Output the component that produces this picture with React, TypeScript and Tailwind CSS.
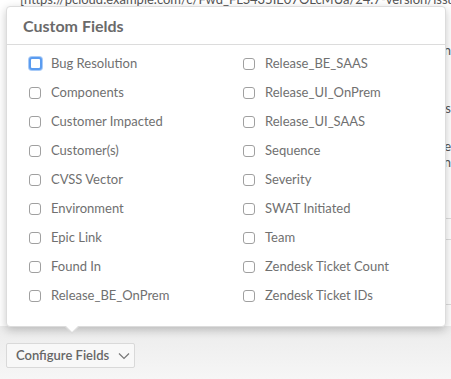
import React from "react";

const left = [
  "Bug Resolution",
  "Components",
  "Customer Impacted",
  "Customer(s)",
  "CVSS Vector",
  "Environment",
  "Epic Link",
  "Found In",
  "Release_BE_OnPrem",
];
const right = [
  "Release_BE_SAAS",
  "Release_UI_OnPrem",
  "Release_UI_SAAS",
  "Sequence",
  "Severity",
  "SWAT Initiated",
  "Team",
  "Zendesk Ticket Count",
  "Zendesk Ticket IDs",
];

function Row({ label, focused }: { label: string; focused?: boolean }) {
  return (
    <div className="flex h-[29px] items-center">
      <span
        className={
          focused
            ? "box-border h-[13px] w-[13px] rounded-[3px] border-2 border-[#5b9cf0] bg-white shadow-[0_0_0_1px_#a9cbf7]"
            : "box-border h-[12px] w-[12px] rounded-[3px] border border-[#a0a0a0] bg-white"
        }
      />
      <span className={focused ? "ml-[9px] text-[13px] text-[#707070]" : "ml-[10px] text-[13px] text-[#707070]"}>
        {label}
      </span>
    </div>
  );
}

export default function App() {
  return (
    <div
      className="relative h-[379px] w-[451px] overflow-hidden bg-[#f3f3f3]"
      style={{ fontFamily: "Lato, 'Open Sans', sans-serif" }}
    >
      {/* background page */}
      <div className="flex h-[326px] flex-col bg-white">
        <div className="h-[6px] overflow-hidden">
          <div className="mt-[-9px] whitespace-nowrap pl-[20px] text-[13px] leading-[16px] text-[#555]">
            [https://pcloud.example.com/c/Fwd_FLS435IE07OLcMUa/24.7-version/issue
          </div>
        </div>
        <div className="flex flex-1 flex-col items-end text-[13px] text-[#555]">
          <div className="mt-[36px] leading-[16px]">n</div>
          <div className="mt-[42px] leading-[16px]">s</div>
          <div className="mt-[22px] leading-[16px]">e</div>
          <div className="leading-[16px]">n</div>
          <div className="mt-[48px] w-[10px] border-b border-[#ddd]" />
          <div className="mt-[20px] w-[10px] border-b border-[#ddd]" />
          <div className="mt-[64px] w-[10px] border-b border-[#ddd]" />
        </div>
      </div>
      <div className="h-[53px] bg-gradient-to-b from-[#ececec] to-[#f6f6f6]" />

      {/* button */}
      <div className="absolute left-[6px] top-[343px] flex h-[25px] w-[129px] items-center rounded-[2px] border border-[#d9d9d9] bg-[#f8f8f8] pl-[9px] text-[13px] font-semibold text-[#666]">
        Configure Fields
        <svg className="ml-[9px]" width="12" height="8" viewBox="0 0 12 8" fill="none">
          <path d="M1 1.5 L6 6.5 L11 1.5" stroke="#777" strokeWidth="1.2" />
        </svg>
      </div>

      {/* popover */}
      <div className="absolute left-[6px] top-[6px] w-[440px] rounded-[4px] border border-[#dcdcdc] bg-white shadow-[0_3px_10px_rgba(0,0,0,0.22)]">
        <div className="flex h-[38px] items-center border-b border-[#dcdcdc] pl-[16px] text-[16px] font-bold text-[#6a6a6a]">
          Custom Fields
        </div>
        <div className="grid grid-cols-2 pl-[22px] pt-[4px] pb-[16px]">
          <div className="flex flex-col">
            {left.map((l, i) => (
              <Row key={l} label={l} focused={i === 0} />
            ))}
          </div>
          <div className="flex flex-col pl-[6px]">
            {right.map((l) => (
              <Row key={l} label={l} />
            ))}
          </div>
        </div>
        {/* arrow */}
        <div className="absolute left-[57px] top-[100%] h-0 w-0 border-x-[8px] border-t-[8px] border-x-transparent border-t-[#dcdcdc]" />
        <div className="absolute left-[58px] top-[100%] mt-[-1px] h-0 w-0 border-x-[7px] border-t-[7px] border-x-transparent border-t-white" />
      </div>
    </div>
  );
}
